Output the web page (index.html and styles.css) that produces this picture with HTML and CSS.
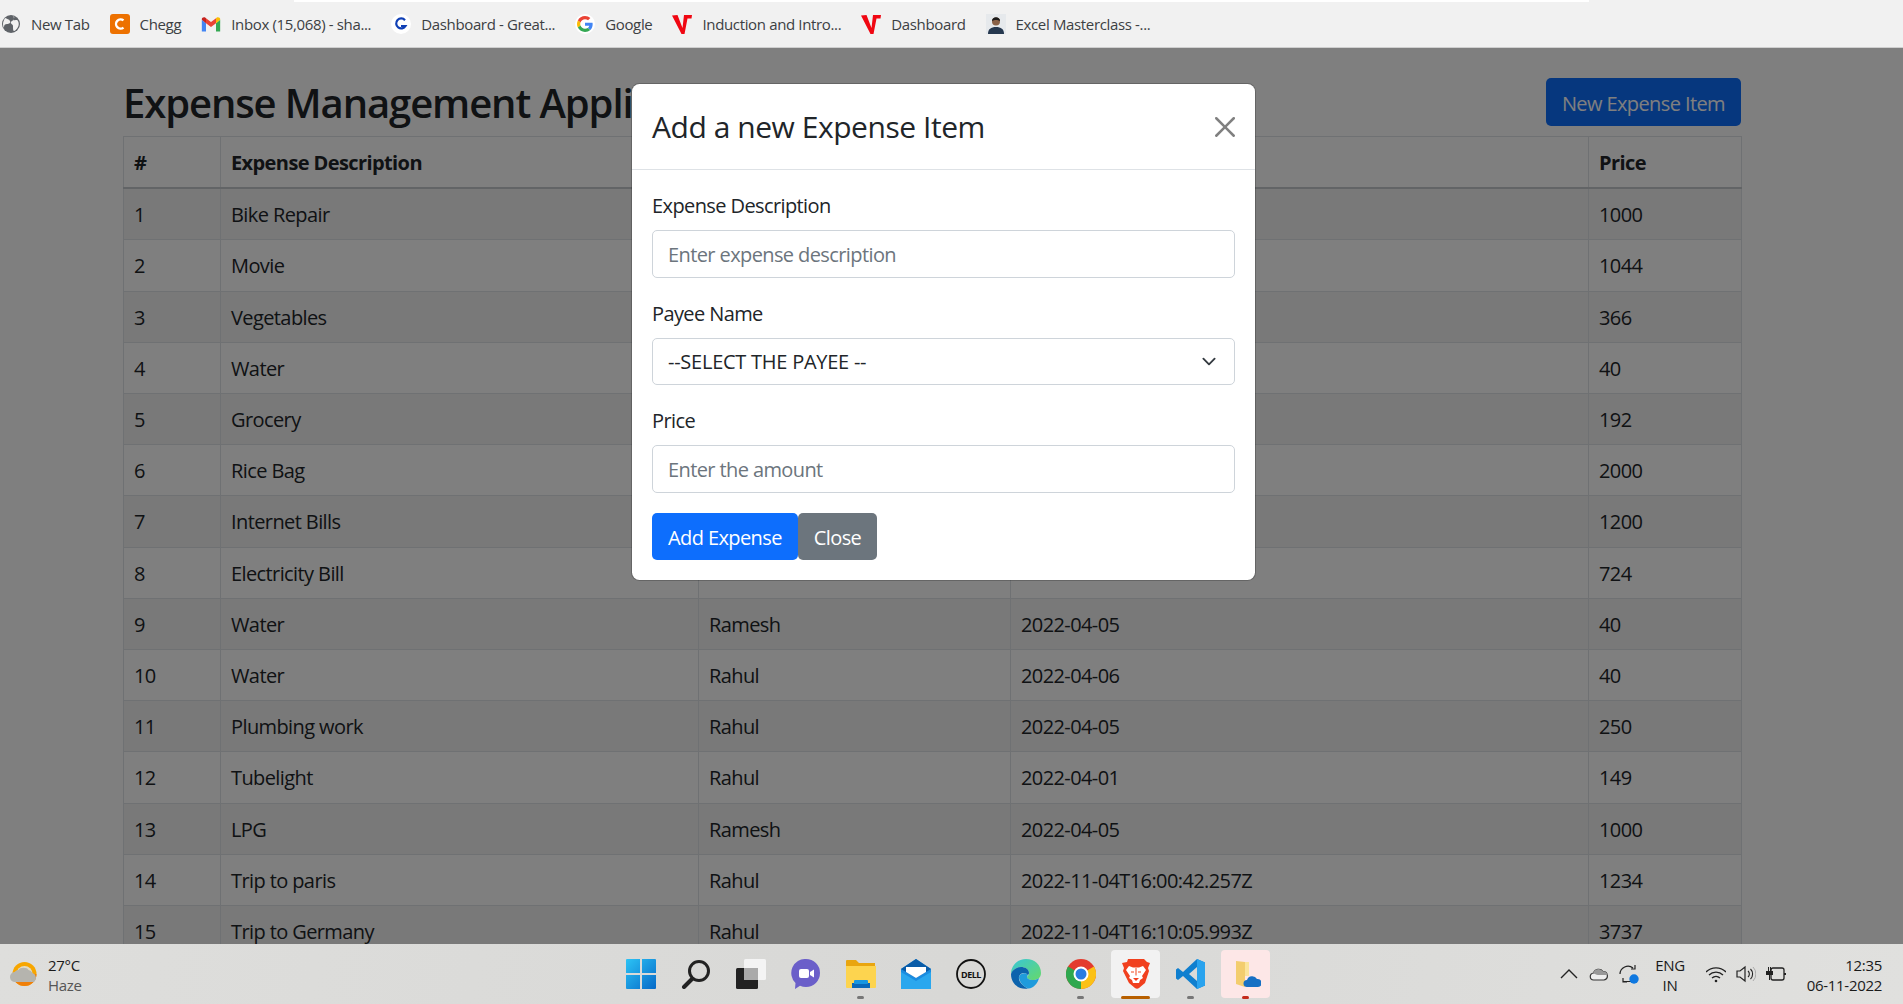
FILE: index.html
```html
<!DOCTYPE html>
<html lang="en">
<head>
    <meta charset="UTF-8">
    <meta name="viewport" content="width=device-width, initial-scale=1.0">
    <title>Expense Management Application</title>
    <link rel="stylesheet" href="styles.css">
</head>
<body>
    <!-- Browser bookmarks bar -->
    <nav class="bookmarks">
        <a class="bookmark">
            <svg class="fav" viewBox="0 0 20 20"><circle cx="10" cy="10" r="9" fill="#5f6368"/><path d="M4 4c2 1 4 1 5 3s-1 3-3 3-3 1-3 3-1-1-1-3 1-4 2-6zM13 2c1 2-1 3 0 4s3-1 4 1 1 4 0 6-3 4-4 4-1-3-1-5-3-2-2-4 3-1 3-3-1-2 0-3z" fill="#f1f1f1"/></svg>
            New Tab
        </a>
        <a class="bookmark">
            <svg class="fav" viewBox="0 0 20 20"><rect width="20" height="20" rx="3" fill="#ed7100"/><path d="M13.500 6.400a4.600 4.600 0 1 0 0 7.200" fill="none" stroke="#fff" stroke-width="2.400"/></svg>
            Chegg
        </a>
        <a class="bookmark">
            <svg class="fav" viewBox="0 0 24 24"><path d="M1 21V7l5 4v10z" fill="#4285f4"/><path d="M18 21V11l5-4v14z" fill="#34a853"/><path d="M18 11V5l1-.8c1.500-1 4-.1 4 1.800V7z" fill="#fbbc04"/><path d="M6 11V5l6 4.500L18 5v6l-6 4.500z" fill="#ea4335"/><path d="M1 7V6c0-1.900 2.500-2.800 4-1.800L6 5v6z" fill="#c5221f"/></svg>
            Inbox (15,068) - sha...
        </a>
        <a class="bookmark">
            <svg class="fav" viewBox="0 0 20 20"><circle cx="10" cy="10" r="10" fill="#fff"/><path d="M14 6.200A5 5 0 1 0 14.500 12H10" fill="none" stroke="#0f3fb5" stroke-width="2.200"/></svg>
            Dashboard - Great...
        </a>
        <a class="bookmark">
            <svg class="fav" viewBox="-6 -6 60 60"><circle cx="24" cy="24" r="30" fill="#fff"/><path fill="#EA4335" d="M24 9.500c3.540 0 6.710 1.220 9.210 3.600l6.850-6.850C35.900 2.380 30.470 0 24 0 14.620 0 6.510 5.380 2.560 13.220l7.980 6.190C12.430 13.720 17.740 9.500 24 9.500z"/><path fill="#4285F4" d="M46.980 24.550c0-1.570-.15-3.090-.38-4.550H24v9.020h12.940c-.58 2.960-2.260 5.480-4.780 7.180l7.730 6c4.510-4.180 7.090-10.360 7.090-17.650z"/><path fill="#FBBC05" d="M10.530 28.590c-.48-1.450-.76-2.990-.76-4.590s.27-3.140.76-4.590l-7.980-6.190C.92 16.460 0 20.120 0 24c0 3.880.92 7.540 2.560 10.780l7.970-6.190z"/><path fill="#34A853" d="M24 48c6.480 0 11.930-2.130 15.890-5.810l-7.730-6c-2.150 1.450-4.920 2.300-8.160 2.300-6.260 0-11.570-4.220-13.470-9.910l-7.980 6.190C6.510 42.620 14.620 48 24 48z"/></svg>
            Google
        </a>
        <a class="bookmark">
            <svg class="fav" viewBox="0 0 20 20"><path d="M0 1.500l5.500-.5 5 13 1.500-13h8l-.5 3.500h-4L12.500 20h-3z" fill="#f00712"/></svg>
            Induction and Intro...
        </a>
        <a class="bookmark">
            <svg class="fav" viewBox="0 0 20 20"><path d="M0 1.500l5.500-.5 5 13 1.500-13h8l-.5 3.500h-4L12.500 20h-3z" fill="#f00712"/></svg>
            Dashboard
        </a>
        <a class="bookmark">
            <svg class="fav" viewBox="0 0 20 20"><rect width="20" height="20" fill="#e6e9ec"/><path d="M2 20c0-5 3-7 8-7s8 2 8 7z" fill="#26384f"/><circle cx="10" cy="7.500" r="4" fill="#8a6248"/><path d="M6 7c0-5 8-5 8 0-2-1.500-6-1.500-8 0z" fill="#1c1a1a"/></svg>
            Excel Masterclass -...
        </a>
    </nav>

    <main class="page">
        <div class="container">
            <div class="page-head">
                <h1>Expense Management Application</h1>
                <button class="btn btn-primary" type="button">New Expense Item</button>
            </div>
            <table class="expenses">
                <colgroup>
                    <col class="col-id"><col class="col-desc"><col class="col-payee"><col class="col-date"><col class="col-price">
                </colgroup>
                <thead>
                    <tr><th>#</th><th>Expense Description</th><th>Payee Name</th><th>Date</th><th>Price</th></tr>
                </thead>
                <tbody>
                    <tr><td>1</td><td>Bike Repair</td><td></td><td></td><td>1000</td></tr>
                    <tr><td>2</td><td>Movie</td><td></td><td></td><td>1044</td></tr>
                    <tr><td>3</td><td>Vegetables</td><td></td><td></td><td>366</td></tr>
                    <tr><td>4</td><td>Water</td><td></td><td></td><td>40</td></tr>
                    <tr><td>5</td><td>Grocery</td><td></td><td></td><td>192</td></tr>
                    <tr><td>6</td><td>Rice Bag</td><td></td><td></td><td>2000</td></tr>
                    <tr><td>7</td><td>Internet Bills</td><td></td><td></td><td>1200</td></tr>
                    <tr><td>8</td><td>Electricity Bill</td><td></td><td></td><td>724</td></tr>
                    <tr><td>9</td><td>Water</td><td>Ramesh</td><td>2022-04-05</td><td>40</td></tr>
                    <tr><td>10</td><td>Water</td><td>Rahul</td><td>2022-04-06</td><td>40</td></tr>
                    <tr><td>11</td><td>Plumbing work</td><td>Rahul</td><td>2022-04-05</td><td>250</td></tr>
                    <tr><td>12</td><td>Tubelight</td><td>Rahul</td><td>2022-04-01</td><td>149</td></tr>
                    <tr><td>13</td><td>LPG</td><td>Ramesh</td><td>2022-04-05</td><td>1000</td></tr>
                    <tr><td>14</td><td>Trip to paris</td><td>Rahul</td><td>2022-11-04T16:00:42.257Z</td><td>1234</td></tr>
                    <tr><td>15</td><td>Trip to Germany</td><td>Rahul</td><td>2022-11-04T16:10:05.993Z</td><td>3737</td></tr>
                </tbody>
            </table>
        </div>

        <!-- Modal sits over the page -->
        <div class="backdrop">
            <div class="modal">
                <div class="modal-header">
                    <h4 class="modal-title">Add a new Expense Item</h4>
                    <svg class="btn-close" viewBox="0 0 16 16"><path d="M.293.293a1 1 0 011.414 0L8 6.586 14.293.293a1 1 0 111.414 1.414L9.414 8l6.293 6.293a1 1 0 01-1.414 1.414L8 9.414l-6.293 6.293a1 1 0 01-1.414-1.414L6.586 8 .293 1.707a1 1 0 010-1.414z"/></svg>
                </div>
                <form class="modal-body">
                    <label class="form-label">Expense Description</label>
                    <input class="form-control" type="text" placeholder="Enter expense description">
                    <label class="form-label">Payee Name</label>
                    <select class="form-control form-select"><option>--SELECT THE PAYEE --</option></select>
                    <label class="form-label">Price</label>
                    <input class="form-control" type="text" placeholder="Enter the amount">
                    <div class="form-actions">
                        <button class="btn btn-primary" type="button">Add Expense</button>
                        <button class="btn btn-secondary" type="button">Close</button>
                    </div>
                </form>
            </div>
        </div>
    </main>

    <!-- Windows taskbar -->
    <footer class="taskbar">
        <div class="weather">
            <svg class="weather-icon" viewBox="0 0 28 24"><circle cx="15" cy="12" r="12" fill="#f7a600"/><path d="M3 12a12 12 0 0 0 24 0z" fill="#f07f09"/><circle cx="15" cy="12" r="8" fill="#e3dcc4"/><path d="M6 20a5 5 0 0 1-1-10 5 5 0 0 1 4-2c1-3 9-3 10 0a5 5 0 0 1 4 3 5 5 0 0 1 1 9z" fill="#b5b4ae"/></svg>
            <div class="weather-text">
                <span>27°C</span>
                <span class="muted">Haze</span>
            </div>
        </div>

        <div class="task-icons">
            <div class="task-icon">
                <svg viewBox="0 0 30 30"><defs><linearGradient id="win" x1="0" y1="0" x2="1" y2="1"><stop offset="0" stop-color="#2cc3f5"/><stop offset="1" stop-color="#0669c8"/></linearGradient></defs><path d="M0 1a1 1 0 0 1 1-1h13v14H0zM16 0h13a1 1 0 0 1 1 1v13H16zM0 16h14v14H1a1 1 0 0 1-1-1zM16 16h14v13a1 1 0 0 1-1 1H16z" fill="url(#win)"/></svg>
            </div>
            <div class="task-icon">
                <svg viewBox="0 0 30 30"><circle cx="18" cy="12" r="9.500" fill="none" stroke="#222" stroke-width="3"/><path d="M11 20l-8 8" stroke="#222" stroke-width="4" stroke-linecap="round"/></svg>
            </div>
            <div class="task-icon">
                <svg viewBox="0 0 30 30"><rect x="0" y="9" width="22" height="21" rx="1.500" fill="#222"/><rect x="8" y="0" width="22" height="21" rx="1.500" fill="#f4f4f4"/><rect x="8" y="9" width="14" height="12" fill="#aaa"/></svg>
            </div>
            <div class="task-icon">
                <svg viewBox="0 0 30 30"><path d="M15 0a14 14 0 0 1 0 28c-2 0-4-.4-6-1.300L4 30l.5-6A14 14 0 0 1 15 0z" fill="#6b5fc9"/><rect x="8" y="10" width="10" height="9" rx="2" fill="#fff"/><path d="M19 13l4-2.500v8L19 16z" fill="#fff"/></svg>
            </div>
            <div class="task-icon is-open">
                <svg viewBox="0 0 30 30"><path d="M0 2a1 1 0 0 1 1-1h9l3 3h16v8H0z" fill="#e9a50f"/><path d="M0 7h30v21a1 1 0 0 1-1 1H1a1 1 0 0 1-1-1z" fill="#fdd44f"/><rect x="6" y="24" width="18" height="5" fill="#0a68b8"/><rect x="8" y="21" width="14" height="4" rx="1" fill="#1796e0"/></svg>
            </div>
            <div class="task-icon">
                <svg viewBox="0 0 30 30"><path d="M0 10L15 0l15 10v19a1 1 0 0 1-1 1H1a1 1 0 0 1-1-1z" fill="#1a8ce0"/><path d="M0 10L15 0l15 10-15 9z" fill="#0a5ca8"/><path d="M5 8h20v5l-10 6-10-6z" fill="#fff"/><path d="M0 13l15 9 15-9v17H0z" fill="#2aa7ee"/></svg>
            </div>
            <div class="task-icon">
                <svg viewBox="0 0 30 30"><circle cx="15" cy="15" r="14" fill="none" stroke="#111" stroke-width="1.800"/><text class="dell-mark" x="15" y="18.500">DELL</text></svg>
            </div>
            <div class="task-icon">
                <svg viewBox="0 0 30 30"><defs><linearGradient id="edge" x1="0" y1="0" x2="1" y2="1"><stop offset="0" stop-color="#38c6d8"/><stop offset="1" stop-color="#66d96a"/></linearGradient></defs><path d="M15 0c9 0 15 6 15 14 0 5-4 7-8 7-3 0-6-1-6-3 0-1 2-1 2-4 0-4-4-6-8-6C6 8 1 11 0 15 0 6 7 0 15 0z" fill="url(#edge)"/><path d="M0 15c1-4 6-7 10-7 4 0 8 2 8 6 0 1-.6 1.600-1.200 2.200C15 13 9 13 8 18c-.8 4 3 9 9 11.500C8 31 0 25 0 15z" fill="#0c63ad"/><path d="M17 29.500c-5-2-9-7-9-11.500 1-4 7-5 8.800-1.800C16 17 16 17.500 16 18c0 2 3 3 6 3 2 0 4-.5 6-2-1 5-6 11-11 10.500z" fill="#1f9bdc"/></svg>
            </div>
            <div class="task-icon is-open">
                <svg viewBox="0 0 30 30"><circle cx="15" cy="15" r="15" fill="#e33b2e"/><path d="M15 15L28 7.500A15 15 0 0 1 15 30z" fill="#fbc116"/><path d="M15 15v15A15 15 0 0 1 2 7.500z" fill="#2fa84f"/><circle cx="15" cy="15" r="7.500" fill="#fff"/><circle cx="15" cy="15" r="5.500" fill="#2a7de1"/></svg>
            </div>
            <div class="task-icon is-active">
                <svg viewBox="0 0 30 30"><path d="M7 0h16l3 3 3 1-2 5 1 3-4 12-6 5c-1 1-3 1-4 0l-6-5L2 12l1-3-2-5 5-1z" fill="#f1401e"/><path d="M8 7l4 1.500h6L22 7l3 4-4 6 1 2-3 2-1 3h-6l-1-3-3-2 1-2-4-6z" fill="#fff"/><path d="M14 8.500h2v8h-2zM10 12h3v2h-3zM17 12h3v2h-3z" fill="#f8a48f"/><path d="M12 19h6l-3 3z" fill="#f1401e"/></svg>
            </div>
            <div class="task-icon is-open">
                <svg viewBox="0 0 30 30"><path d="M21 0l8 3.500v23L21 30 7 17l-5 4-2-1.500v-9L2 9l5 4zM21 8l-8 7 8 7z" fill="#0f7fcf"/><path d="M21 0l8 3.500v23L21 30z" fill="#29a3ee"/></svg>
            </div>
            <div class="task-icon is-flagged">
                <svg viewBox="0 0 30 30"><path d="M5 2l9 1v25l-9-3z" fill="#f3cd6e"/><path d="M14 3h4v14h-4z" fill="#fbe49b"/><path d="M16 28a3.500 3.500 0 0 1 0-7 5.500 5.500 0 0 1 10-1 4 4 0 0 1 1 8z" fill="#1670c4"/></svg>
            </div>
        </div>

        <div class="tray">
            <svg class="tray-icon" viewBox="0 0 20 20"><path d="M2 14l8-8 8 8" fill="none" stroke="#222" stroke-width="1.400"/></svg>
            <svg class="tray-icon" viewBox="0 0 20 20"><path d="M5 16a3.500 3.500 0 0 1-.5-7A5.500 5.500 0 0 1 14 7.500a4.300 4.300 0 0 1 1 8.500z" fill="#eee" stroke="#333" stroke-width="1.200"/><path d="M4 9.500A5.500 5.500 0 0 1 14 7.500 4.300 4.300 0 0 1 18.500 11H9c-2 0-3-1.500-5-1.500z" fill="#999"/></svg>
            <svg class="tray-icon" viewBox="0 0 20 20"><path d="M1 10a8 8 0 0 1 13-6M16 1v4h-4M13 17.500H4M4 14v4h4" fill="none" stroke="#222" stroke-width="1.200"/><circle cx="15" cy="15" r="4.700" fill="#0f78e0"/></svg>
            <div class="lang">
                <span>ENG</span>
                <span>IN</span>
            </div>
            <svg class="tray-icon" viewBox="0 0 20 20"><path d="M0 8a14 14 0 0 1 20 0M3 11a10 10 0 0 1 14 0M6 14a6 6 0 0 1 8 0" fill="none" stroke="#222" stroke-width="1.300"/><circle cx="10" cy="17" r="1.300" fill="#222"/></svg>
            <svg class="tray-icon" viewBox="0 0 20 20"><path d="M1 7h3l5-4v14l-5-4H1z" fill="none" stroke="#222" stroke-width="1.200"/><path d="M12 7a4 4 0 0 1 0 6M14.500 5a7 7 0 0 1 0 10" fill="none" stroke="#222" stroke-width="1.100"/><path d="M17 3a10 10 0 0 1 0 14" fill="none" stroke="#aaa"/></svg>
            <svg class="tray-icon" viewBox="0 0 20 20"><rect x="5" y="4" width="13" height="12" rx="2" fill="none" stroke="#222" stroke-width="1.300"/><path d="M18 9h2v2h-2z" fill="#222"/><path d="M0 7h7v4H0zM2 3h1v4H2zM5 3h-1v4h1z" fill="#222"/><path d="M3 11h1v5H3z" fill="#222"/></svg>
            <div class="clock">
                <span>12:35</span>
                <span>06-11-2022</span>
            </div>
        </div>
    </footer>
</body>
</html>
```

FILE: styles.css
```css
html, body {
    margin: 0;
    padding: 0;
    height: 100%;
    overflow: hidden;
}

body {
    display: flex;
    flex-direction: column;
    background-color: #ffffff;
    color: #212529;
    font-family: "Open Sans", "Noto Sans", Arial, sans-serif;
    font-size: 20px;
    line-height: 30px;
    letter-spacing: -0.6px;
}

/* bookmarks bar */
.bookmarks {
    flex: none;
    display: flex;
    align-items: center;
    gap: 20px;
    height: 48px;
    box-sizing: border-box;
    padding: 0 0 0 1px;
    background-color: #f1f1f1;
    background-image: linear-gradient(#ffffff, #ffffff);
    background-size: 1295px 2px;
    background-position: 294px 0;
    background-repeat: no-repeat;
    border-bottom: 1px solid #cfcfcf;
    font-size: 15px;
    letter-spacing: -0.35px;
    color: #3c4043;
}

.bookmark {
    display: flex;
    align-items: center;
    gap: 10px;
    white-space: nowrap;
}

.fav {
    width: 20px;
    height: 20px;
    flex: none;
}

/* page behind the modal */
.page {
    flex: 1;
    position: relative;
    overflow: hidden;
    min-height: 0;
}

.container {
    width: 1618px;
    margin-left: 123px;
    padding-top: 30px;
}

.page-head {
    display: flex;
    justify-content: space-between;
    align-items: center;
    margin-bottom: 10px;
}

h1 {
    margin: 0;
    padding-top: 2px;
    font-size: 40px;
    line-height: 46px;
    font-weight: 600;
    letter-spacing: -1.1px;
}

.btn {
    height: 47.5px;
    padding: 4px 15px 0;
    border: 1px solid transparent;
    border-radius: 5px;
    font: inherit;
    letter-spacing: inherit;
    color: #ffffff;
}

.btn-primary {
    background-color: #0d6efd;
}

.btn-secondary {
    background-color: #6c757d;
}

.expenses {
    width: 100%;
    table-layout: fixed;
    border-collapse: collapse;
}

.col-id { width: 97px; }
.col-desc { width: 478px; }
.col-payee { width: 312px; }
.col-date { width: 578px; }
.col-price { width: 153px; }

.expenses th,
.expenses td {
    padding: 11px 10px 9px;
    border: 1px solid #dee2e6;
    line-height: 30.2px;
    text-align: left;
    white-space: nowrap;
}

.expenses th {
    border-bottom: 2px solid #c4c8cc;
    font-weight: 700;
}

.expenses tbody tr:nth-child(odd) {
    background-color: #f2f2f2;
}

/* modal */
.backdrop {
    position: absolute;
    inset: 0;
    display: flex;
    justify-content: center;
    align-items: flex-start;
    padding: 36px 16px 0 0;
    background-color: rgba(0, 0, 0, 0.5);
}

.modal {
    width: 623px;
    border-radius: 7.5px;
    background-color: #ffffff;
    box-shadow: 0 0 0 1px rgba(0, 0, 0, 0.2);
}

.modal-header {
    display: flex;
    justify-content: space-between;
    align-items: center;
    padding: 20px;
    border-bottom: 1px solid #dee2e6;
}

.modal-title {
    margin: 0;
    font-size: 30px;
    line-height: 45px;
    font-weight: 500;
    letter-spacing: -0.45px;
}

.btn-close {
    width: 20px;
    height: 20px;
    fill: #808080;
}

.modal-body {
    display: flex;
    flex-direction: column;
    padding: 20px;
}

.form-label {
    padding-top: 1px;
    margin-bottom: 9px;
}

.form-control {
    box-sizing: border-box;
    width: 100%;
    height: 47.5px;
    margin-bottom: 20px;
    padding: 2px 15px 0;
    border: 1px solid #ced4da;
    border-radius: 5px;
    background-color: #ffffff;
    color: #212529;
    font: inherit;
    letter-spacing: inherit;
}

.form-control::placeholder {
    color: #6c757d;
    opacity: 1;
}

.form-select {
    appearance: none;
    letter-spacing: -0.25px;
    background-image: url("data:image/svg+xml,%3csvg xmlns='http://www.w3.org/2000/svg' viewBox='0 0 16 16'%3e%3cpath fill='none' stroke='%23343a40' stroke-linecap='round' stroke-linejoin='round' stroke-width='2' d='M2 5l6 6 6-6'/%3e%3c/svg%3e");
    background-repeat: no-repeat;
    background-position: right 15px center;
    background-size: 20px 15px;
}

.form-actions {
    display: flex;
}

/* taskbar */
.taskbar {
    flex: none;
    display: grid;
    grid-template-columns: 613px auto 1fr;
    align-items: center;
    height: 60px;
    background-color: #dcdcda;
    background-image: linear-gradient(100deg, #dededc, #d8d8d6 50%, #e0e0de);
    font-size: 15px;
    line-height: 20px;
    letter-spacing: -0.3px;
    color: #1a1a1a;
}

.weather {
    display: flex;
    align-items: center;
    gap: 10px;
    padding-left: 9px;
}

.weather-icon {
    width: 29px;
    height: 24px;
}

.weather-text,
.lang,
.clock {
    display: flex;
    flex-direction: column;
    padding-top: 1px;
}

.muted {
    color: #555555;
}

.task-icons {
    display: flex;
    align-items: center;
}

.task-icon {
    position: relative;
    display: flex;
    align-items: center;
    justify-content: center;
    width: 55px;
    height: 60px;
}

.task-icon svg {
    width: 30px;
    height: 30px;
}

.task-icon.is-open::after,
.task-icon.is-active::after,
.task-icon.is-flagged::after {
    content: "";
    position: absolute;
    left: 24px;
    bottom: 5px;
    width: 7px;
    height: 3px;
    border-radius: 2px;
    background-color: #777777;
}

.task-icon.is-active::before,
.task-icon.is-flagged::before {
    content: "";
    position: absolute;
    left: 3px;
    right: 3px;
    top: 6px;
    bottom: 6px;
    border-radius: 4px;
    background-color: #f2f2f2;
}

.task-icon.is-flagged::before {
    background-color: #fde7e7;
}

.task-icon.is-active svg,
.task-icon.is-flagged svg {
    position: relative;
}

.task-icon.is-active::after {
    left: 13px;
    width: 29px;
    background-color: #b86000;
}

.task-icon.is-flagged::after {
    background-color: #c42b1c;
}

.dell-mark {
    font-size: 9px;
    font-weight: 700;
    letter-spacing: -0.5px;
    text-anchor: middle;
    fill: #111111;
}

.tray {
    display: flex;
    align-items: center;
    padding-left: 286px;
    gap: 10px;
}

.tray-icon {
    width: 20px;
    height: 20px;
    flex: none;
}

.lang {
    align-items: center;
    width: 40px;
    margin: 0 6px 0 1px;
}

.clock {
    align-items: flex-end;
    width: 83px;
    margin-left: 3px;
}
```
